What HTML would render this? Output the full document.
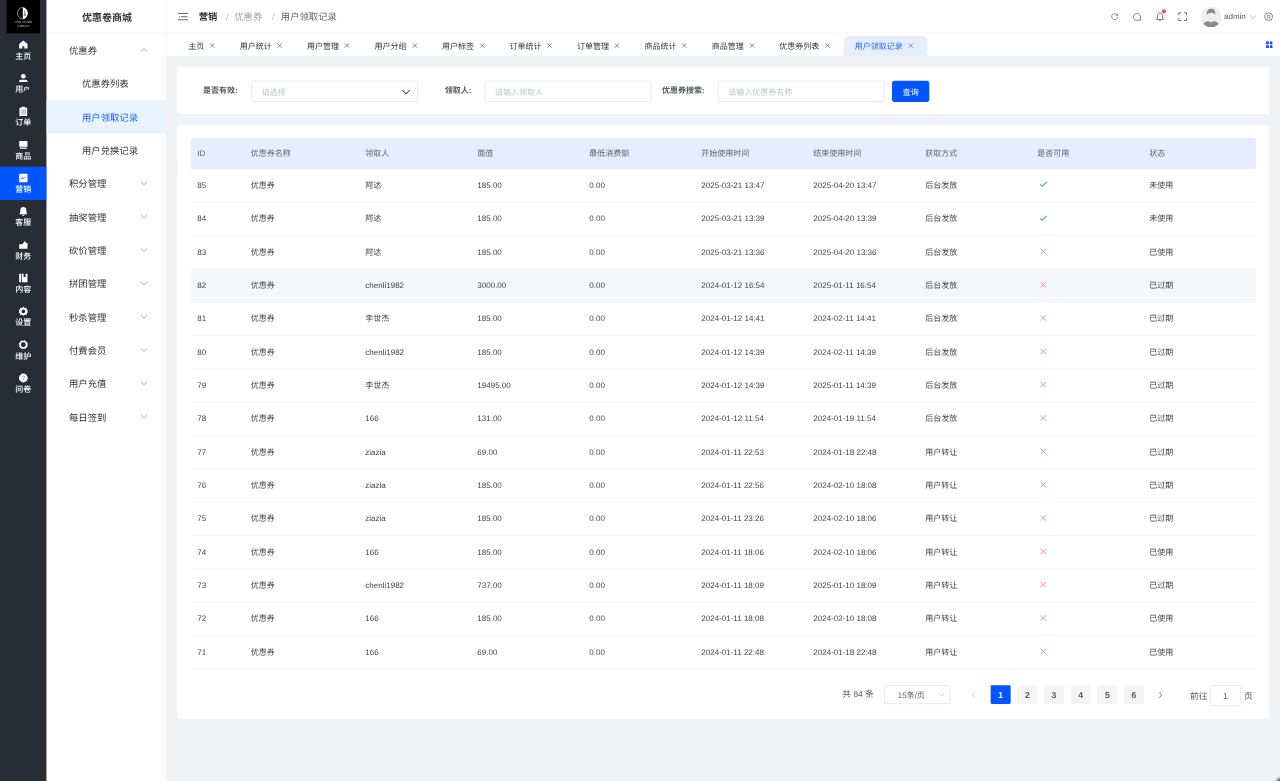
<!DOCTYPE html>
<html lang="zh-CN">
<head>
<meta charset="utf-8">
<title>用户领取记录</title>
<style>
*{box-sizing:border-box;margin:0;padding:0}
html,body{width:1280px;height:781px;overflow:hidden;background:#f0f2f5}
body{font-family:"Liberation Sans","Noto Sans CJK SC",sans-serif;color:#606266;font-size:12px;text-rendering:geometricPrecision;-webkit-font-smoothing:antialiased}
#app{position:absolute;left:0;top:0;width:1920px;height:1172px;transform:scale(0.6666667);transform-origin:0 0;background:#f0f2f5;overflow:hidden}
/* dark aside */
.a1{position:absolute;left:0;top:0;width:70px;height:1172px;background:#282c34}
.logo{position:absolute;left:10px;top:0;width:50px;height:49.5px;background:#000}
.logo svg{position:absolute;left:0;top:0;width:50px;height:50px}
.its{position:absolute;left:0;top:50px;width:70px}
.it{height:50px;position:relative;color:#fff;text-align:center}
.it svg{position:absolute;left:28px;top:9.5px;width:14px;height:14px;overflow:visible}
.it span{position:absolute;left:0;width:70px;top:27px;font-size:12px;line-height:14px;color:#fff;font-weight:500}
.it.act{background:#0256ff}
.it small{display:inline-block;width:12px;font-size:10px;text-align:left;vertical-align:1px;line-height:10px;transform:scaleY(0.8)}
/* white aside */
.a2{position:absolute;left:70px;top:0;width:180px;height:1172px;background:#fff;border-right:1px solid #e9ecf1}
.a2 .tt{height:50px;line-height:55px;overflow:hidden;text-align:center;font-size:15px;font-weight:700;color:#33363c;border-bottom:1px solid #f0f2f5;padding-left:2px}
.mi{height:50px;line-height:52px;font-size:14px;color:#303133;padding-left:33.5px;position:relative}
.mi.sub{padding-left:53px}
.mi.on{background:#e8f3ff;color:#1a62f0}
.mi .arr{position:absolute;left:140px;top:18.5px;width:12px;height:12px}
/* header */
.hd{position:absolute;left:250px;top:0;width:1670px;height:50px;background:#fff;border-bottom:1px solid #f1f2f4}
.hd .ham{position:absolute;left:17px;top:18px;width:15px;height:14px}
.bc{position:absolute;left:48px;top:0;height:50px;line-height:50px;font-size:14px;color:#9c9ea3;white-space:nowrap}
.bc b{color:#303133;font-weight:700}
.bc i{font-style:normal;color:#b4b8bf;margin:0 8.5px 0 13px}
.bc i+i,.bc i.s2{margin-left:14.5px;margin-right:9.5px}
.bc em{font-style:normal;color:#606266}
.hi{position:absolute;top:18px;width:14px;height:14px}
.av{position:absolute;left:1550.5px;top:9.5px;width:31px;height:31px;border-radius:50%;overflow:hidden;background:#efefef}
.adm{position:absolute;left:1586px;top:0;line-height:50px;font-size:12px;color:#50545a}
/* tabs */
.tb{position:absolute;left:250px;top:50px;width:1670px;height:34px;background:#fff}
.tabs{position:absolute;left:16.3px;top:4px;height:30px;display:flex}
.tab{height:30px;line-height:30px;font-size:12px;color:#303133;padding-left:16px;position:relative;white-space:nowrap;flex:none}
.tab .x{position:relative;display:inline-block;vertical-align:top;margin-left:6.7px;top:9.1px;width:10.6px;height:10.6px;color:#70757d}
.tab span{display:inline-block}
.tab.cur{background:#e4eefe;color:#2a68ea;border-radius:8px 8px 0 0}
.tab.cur .x{color:#5c8cf0}
.fl{position:absolute;bottom:0;width:5px;height:8px;background:#e4eefe}
.fl.l{left:-4.5px}
.fl.r{right:-4.5px}
.fl.l:after,.fl.r:after{content:"";position:absolute;top:-1px;width:10px;height:9px;background:#fff}
.fl.l:after{left:-5.5px;border-radius:0 0 5px 0}
.fl.r:after{left:0.5px;border-radius:0 0 0 5px}
.grid{position:absolute;left:1649px;top:11.5px;width:10px;height:10px}
/* content */
.card{position:absolute;left:266px;width:1638px;background:#fff;border-radius:4px}
.c1{top:100px;height:71px}
.c2{top:187px;height:891px}
.lab{position:absolute;top:19.5px;height:32px;line-height:32px;font-size:12px;font-weight:700;color:#55585e;white-space:nowrap}
.inp{position:absolute;top:21px;width:250px;height:32px;border:1px solid #dcdfe6;border-radius:3px;line-height:32px;padding-left:15px;font-size:12px;color:#c0c4cc;background:#fff}
.btn{position:absolute;left:1072px;top:21px;width:56px;height:32px;border-radius:4px;background:#0256ff;color:#fff;font-size:12px;line-height:34px;text-align:center}
table{position:absolute;left:20px;top:20px;width:1598px;border-collapse:collapse;table-layout:fixed;font-size:12px;color:#404348}
th{height:46.5px;text-align:left;font-weight:400;color:#62666e;padding:0 0 1.5px 10px}
.thbg{position:absolute;left:20px;top:20px;width:1598px;height:46.5px;background:#e4eefe;border-radius:4px}
td{height:50px;line-height:23px;padding:0.4px 0 0 10px;border-bottom:1px solid #eff0f4;white-space:nowrap}
.hvbg{position:absolute;left:20px;top:216.5px;width:1598px;height:49.5px;background:#f5f7fa}
td svg{display:block;width:12px;height:12px;margin-left:2.5px;position:relative;top:-2px}
/* pagination */
.pg{position:absolute;right:25px;top:841px;height:28px;display:flex;align-items:center;font-size:13px;color:#606266;white-space:nowrap}
.pg .tot{margin-right:15px;position:relative;top:-1.2px}
.pg .sz{width:100px;height:28px;border:1px solid #dcdfe6;border-radius:3px;position:relative;margin-right:15px;text-align:center;padding-right:18px;line-height:28px;font-size:12px}
.pg .sz svg{position:absolute;right:7px;top:8px;width:10px;height:10px}
.pg .nb{width:30px;height:28px;margin:0 5px;position:relative}
.pg .nb svg{position:absolute;left:9.5px;top:8.5px;width:11px;height:11px}
.pg .n{width:30px;height:28px;margin:0 5px;background:#f4f4f5;border-radius:2px;text-align:center;line-height:30px;font-weight:700;font-size:13px;color:#55585e}
.pg .n.a{background:#0256ff;color:#fff}
.pg .go{margin-left:24px}
.pg .ed{position:relative;top:1.5px;width:46px;height:31px;border:1px solid #dcdfe6;border-radius:3px;margin:0 5px 0 4px;text-align:center;line-height:31px}
.corner{position:absolute;right:-6px;bottom:-6px;width:11px;height:11px;border-radius:50%;background:#5a6472;filter:blur(1.5px)}
</style>
</head>
<body>
<div id="app">
  <div class="a1">
    <div class="logo">
      <svg viewBox="0 0 50 50">
        <ellipse cx="23.6" cy="19.8" rx="7.3" ry="8.5" fill="none" stroke="#e8e8e8" stroke-width="0.9"/>
        <path d="M24.2 11.3 A7.3 8.5 0 0 1 24.2 28.3 Z" fill="#fff"/>
        <path d="M27 14 L29.6 24 H25.2 Z" fill="#9a9a9a"/>
        <text x="25" y="35.2" font-size="4.6" font-family="Liberation Sans, sans-serif" fill="#bdbdbd" text-anchor="middle" letter-spacing="0.3">ONE MORE</text>
        <text x="25" y="40.6" font-size="4.6" font-family="Liberation Sans, sans-serif" fill="#bdbdbd" text-anchor="middle" letter-spacing="0.3">DREAM</text>
      </svg>
    </div>
    <div class="its">
<div class="it"><svg viewBox="0 0 14 14" fill="#fff"><path d="M7 0.8 L13.3 6 V12.9 H8.5 V9.2 H5.5 V12.9 H0.7 V6 Z"/></svg><span>主页</span></div>
<div class="it"><svg viewBox="0 0 14 14" fill="#fff"><circle cx="7" cy="4.4" r="3.5"/><path d="M0.6 13 V12.2 Q0.6 9.7 3.4 9.7 H10.6 Q13.4 9.7 13.4 12.2 V13 Z"/></svg><span>用<small>户</small></span></div>
<div class="it"><svg viewBox="0 0 14 14" fill="#fff"><path d="M1.2 1.6 H4.4 V0 H9.6 V1.6 H12.8 V14 H1.2 Z M3.6 4.6 V11.4 H10.4 V4.6 Z" fill-rule="evenodd"/><path d="M3.6 4.6 H10.4 V11.4 H3.6 Z" fill="#dfe6ee"/><path d="M5 6.6 H9 M5 9 H9" stroke="#8d97a8" stroke-width="0.9" fill="none"/></svg><span>订单</span></div>
<div class="it"><svg viewBox="0 0 14 14" fill="#fff"><path d="M1.6 1.4 H12.4 Q13.2 1.4 13.2 2.2 V9.2 Q13.2 10 12.4 10 H1.6 Q0.8 10 0.8 9.2 V2.2 Q0.8 1.4 1.6 1.4 Z M1.8 11.2 H12.2 V13 H1.8 Z"/></svg><span>商品</span></div>
<div class="it act"><svg viewBox="0 0 14 14" fill="#fff"><path d="M1.6 0.8 H12.4 Q13.3 0.8 13.3 1.7 V12.3 Q13.3 13.2 12.4 13.2 H1.6 Q0.7 13.2 0.7 12.3 V1.7 Q0.7 0.8 1.6 0.8 Z M3.2 9.6 L5.7 7 L7.4 8.5 L10.9 4.8 L10.3 4.2 L7.4 7.3 L5.7 5.8 L2.6 9 Z" fill-rule="evenodd"/></svg><span>营销</span></div>
<div class="it"><svg viewBox="0 0 14 14" fill="#fff"><path d="M7 0.6 C10 0.6 11.6 3 11.6 5.6 V9 L13.2 11.2 H0.8 L2.4 9 V5.6 C2.4 3 4 0.6 7 0.6 Z M5.2 12.2 H8.8 C8.8 13.2 7.9 13.9 7 13.9 C6.1 13.9 5.2 13.2 5.2 12.2 Z"/></svg><span>客服</span></div>
<div class="it"><svg viewBox="0 0 14 14" fill="#fff"><path d="M0.8 6.4 H5.6 L9.2 1.6 L11.4 4.4 H13.2 V13 H0.8 Z"/></svg><span>财务</span></div>
<div class="it"><svg viewBox="0 0 14 14" fill="#fff"><path d="M0.8 0.8 H3.9 V13.4 H0.8 Z M5 0.8 H7.4 V6.2 L8.9 5 L10.4 6.2 V0.8 H13.2 V13.4 H5 Z"/></svg><span>内容</span></div>
<div class="it"><svg viewBox="0 0 14 14" fill="#fff"><path d="M7 0.2 L9 1.9 L11.6 1.6 L12.1 4.1 L14 5.6 L12.9 7 L14 8.4 L12.1 9.9 L11.6 12.4 L9 12.1 L7 13.8 L5 12.1 L2.4 12.4 L1.9 9.9 L0 8.4 L1.1 7 L0 5.6 L1.9 4.1 L2.4 1.6 L5 1.9 Z M7 4.2 A2.8 2.8 0 1 0 7 9.8 A2.8 2.8 0 1 0 7 4.2 Z" fill-rule="evenodd"/></svg><span>设置</span></div>
<div class="it"><svg viewBox="0 0 14 14" fill="#fff"><path d="M7 1 A6 6 0 1 0 7 13 A6 6 0 1 0 7 1 Z M7 3.5 A3.5 3.5 0 1 1 7 10.5 A3.5 3.5 0 1 1 7 3.5 Z" fill-rule="evenodd"/><circle cx="7" cy="7" r="6.3" fill="none" stroke="#fff" stroke-width="1.2" stroke-dasharray="2.47 2.47"/><circle cx="7" cy="7" r="3.2" fill="#222844"/></svg><span>维护</span></div>
<div class="it"><svg viewBox="0 0 14 14" fill="#fff"><circle cx="7" cy="7" r="6.6"/><text x="7" y="10.4" font-size="9.5" font-family="Liberation Sans, sans-serif" font-weight="bold" text-anchor="middle" fill="#98a2b5">?</text></svg><span>问卷</span></div>
    </div>
  </div>
  <div class="a2">
    <div class="tt">优惠卷商城</div>
<div class="mi">优惠券<svg class="arr" viewBox="0 0 12 12"><path d="M1.5 8.2 L6 3.8 L10.5 8.2" fill="none" stroke="#909399" stroke-width="1.2"/></svg></div>
<div class="mi sub">优惠券列表</div>
<div class="mi sub on">用户领取记录</div>
<div class="mi sub">用户兑换记录</div>
<div class="mi">积分管理<svg class="arr" viewBox="0 0 12 12"><path d="M1.5 3.8 L6 8.2 L10.5 3.8" fill="none" stroke="#909399" stroke-width="1.2"/></svg></div>
<div class="mi">抽奖管理<svg class="arr" viewBox="0 0 12 12"><path d="M1.5 3.8 L6 8.2 L10.5 3.8" fill="none" stroke="#909399" stroke-width="1.2"/></svg></div>
<div class="mi">砍价管理<svg class="arr" viewBox="0 0 12 12"><path d="M1.5 3.8 L6 8.2 L10.5 3.8" fill="none" stroke="#909399" stroke-width="1.2"/></svg></div>
<div class="mi">拼团管理<svg class="arr" viewBox="0 0 12 12"><path d="M1.5 3.8 L6 8.2 L10.5 3.8" fill="none" stroke="#909399" stroke-width="1.2"/></svg></div>
<div class="mi">秒杀管理<svg class="arr" viewBox="0 0 12 12"><path d="M1.5 3.8 L6 8.2 L10.5 3.8" fill="none" stroke="#909399" stroke-width="1.2"/></svg></div>
<div class="mi">付费会员<svg class="arr" viewBox="0 0 12 12"><path d="M1.5 3.8 L6 8.2 L10.5 3.8" fill="none" stroke="#909399" stroke-width="1.2"/></svg></div>
<div class="mi">用户充值<svg class="arr" viewBox="0 0 12 12"><path d="M1.5 3.8 L6 8.2 L10.5 3.8" fill="none" stroke="#909399" stroke-width="1.2"/></svg></div>
<div class="mi">每日签到<svg class="arr" viewBox="0 0 12 12"><path d="M1.5 3.8 L6 8.2 L10.5 3.8" fill="none" stroke="#909399" stroke-width="1.2"/></svg></div>
  </div>
  <div class="hd">
    <svg class="ham" viewBox="0 0 14 14" preserveAspectRatio="none"><path d="M0 2.3 H14 M1.3 7 H2.9 M4.2 7 H13.4 M0 11.7 H14" stroke="#666b75" stroke-width="1.6" fill="none"/></svg>
    <div class="bc"><b>营销</b><i>/</i>优惠券<i class="s2">/</i><em>用户领取记录</em></div>
    <svg class="hi" style="left:1416px;top:19px;width:12px;height:12px" viewBox="0 0 14 14"><path d="M11.6 4.2 A5.3 5.3 0 1 0 12.3 7.6" fill="none" stroke="#4c5058" stroke-width="1.1"/><path d="M12.4 1.6 V4.8 H9.2" fill="none" stroke="#4c5058" stroke-width="1.1"/></svg>
    <svg class="hi" style="left:1449px;top:18.5px;width:13px;height:13px" viewBox="0 0 14 14"><path d="M7 1.4 A5.6 5.6 0 1 0 10 11.7 L12.6 12.4 V7.4 A5.6 5.6 0 0 0 7 1.4 Z" fill="none" stroke="#4c5058" stroke-width="1.1"/></svg>
    <svg class="hi" style="left:1483px" viewBox="0 0 14 14"><path d="M7 1.2 C9.6 1.2 10.8 3.2 10.8 5.6 V9.6 L12.6 11.2 H1.4 L3.2 9.6 V5.6 C3.2 3.2 4.4 1.2 7 1.2 Z M5.8 12.8 H8.2" fill="none" stroke="#4c5058" stroke-width="1.1"/></svg>
    <div style="position:absolute;left:1493px;top:14px;width:6px;height:6px;border-radius:50%;background:#f04a5a"></div>
    <svg class="hi" style="left:1517px" viewBox="0 0 14 14"><path d="M1.2 4.8 V1.2 H4.8 M9.2 1.2 H12.8 V4.8 M12.8 9.2 V12.8 H9.2 M4.8 12.8 H1.2 V9.2" fill="none" stroke="#4c5058" stroke-width="1.25"/></svg>
    <div class="av"><svg viewBox="0 0 30 30" width="31" height="31"><rect width="30" height="30" fill="#efefef"/><path d="M2.5 30 C2.5 22.5 8 20.8 15 20.8 C22 20.8 27.5 22.5 27.5 30 Z" fill="#8b8b8b"/><rect x="12" y="16" width="6" height="6.4" fill="#efe7e5"/><ellipse cx="15" cy="12.8" rx="5.2" ry="6.6" fill="#f3eceb"/><path d="M9 12.6 C7.8 5.4 11.4 2.8 15.4 3 C19.8 3 22.2 5.8 21 12.6 C20.2 9.6 18.6 8.8 15 9.2 C11.6 9 10 9.8 9 12.6 Z" fill="#8d8d8d"/></svg></div>
    <div class="adm">admin</div>
    <svg class="hi" style="left:1624px;top:20px;width:11px;height:11px" viewBox="0 0 12 12"><path d="M1.5 3.8 L6 8.2 L10.5 3.8" fill="none" stroke="#80858d" stroke-width="1.1"/></svg>
    <svg class="hi" style="left:1646px" viewBox="0 0 14 14"><path d="M7 0.9 L8.7 2.3 L10.9 2 L11.5 4.1 L13.3 5.3 L12.5 7 L13.3 8.7 L11.5 9.9 L10.9 12 L8.7 11.7 L7 13.1 L5.3 11.7 L3.1 12 L2.5 9.9 L0.7 8.7 L1.5 7 L0.7 5.3 L2.5 4.1 L3.1 2 L5.3 2.3 Z" fill="none" stroke="#4c5058" stroke-width="1"/><circle cx="7" cy="7" r="2.2" fill="none" stroke="#4c5058" stroke-width="1"/></svg>
  </div>
  <div class="tb">
    <div class="tabs">
<div class="tab" style="width:77.20px"><span>主页</span><svg class="x" viewBox="0 0 12 12"><path d="M2.4 2.4 L9.6 9.6 M9.6 2.4 L2.4 9.6" fill="none" stroke="currentColor" stroke-width="1.5"/></svg></div>
<div class="tab" style="width:101.20px"><span>用户统计</span><svg class="x" viewBox="0 0 12 12"><path d="M2.4 2.4 L9.6 9.6 M9.6 2.4 L2.4 9.6" fill="none" stroke="currentColor" stroke-width="1.5"/></svg></div>
<div class="tab" style="width:101.20px"><span>用户管理</span><svg class="x" viewBox="0 0 12 12"><path d="M2.4 2.4 L9.6 9.6 M9.6 2.4 L2.4 9.6" fill="none" stroke="currentColor" stroke-width="1.5"/></svg></div>
<div class="tab" style="width:101.20px"><span>用户分组</span><svg class="x" viewBox="0 0 12 12"><path d="M2.4 2.4 L9.6 9.6 M9.6 2.4 L2.4 9.6" fill="none" stroke="currentColor" stroke-width="1.5"/></svg></div>
<div class="tab" style="width:101.20px"><span>用户标签</span><svg class="x" viewBox="0 0 12 12"><path d="M2.4 2.4 L9.6 9.6 M9.6 2.4 L2.4 9.6" fill="none" stroke="currentColor" stroke-width="1.5"/></svg></div>
<div class="tab" style="width:101.20px"><span>订单统计</span><svg class="x" viewBox="0 0 12 12"><path d="M2.4 2.4 L9.6 9.6 M9.6 2.4 L2.4 9.6" fill="none" stroke="currentColor" stroke-width="1.5"/></svg></div>
<div class="tab" style="width:101.20px"><span>订单管理</span><svg class="x" viewBox="0 0 12 12"><path d="M2.4 2.4 L9.6 9.6 M9.6 2.4 L2.4 9.6" fill="none" stroke="currentColor" stroke-width="1.5"/></svg></div>
<div class="tab" style="width:101.20px"><span>商品统计</span><svg class="x" viewBox="0 0 12 12"><path d="M2.4 2.4 L9.6 9.6 M9.6 2.4 L2.4 9.6" fill="none" stroke="currentColor" stroke-width="1.5"/></svg></div>
<div class="tab" style="width:101.20px"><span>商品管理</span><svg class="x" viewBox="0 0 12 12"><path d="M2.4 2.4 L9.6 9.6 M9.6 2.4 L2.4 9.6" fill="none" stroke="currentColor" stroke-width="1.5"/></svg></div>
<div class="tab" style="width:113.20px"><span>优惠券列表</span><svg class="x" viewBox="0 0 12 12"><path d="M2.4 2.4 L9.6 9.6 M9.6 2.4 L2.4 9.6" fill="none" stroke="currentColor" stroke-width="1.5"/></svg></div>
<div class="tab cur" style="width:124.5px"><i class="fl l"></i><i class="fl r"></i><span>用户领取记录</span><svg class="x" viewBox="0 0 12 12"><path d="M2.4 2.4 L9.6 9.6 M9.6 2.4 L2.4 9.6" fill="none" stroke="currentColor" stroke-width="1.5"/></svg></div>
    </div>
    <svg class="grid" viewBox="0 0 10 10"><rect x="0" y="0" width="4.3" height="4.3" rx="0.8" fill="#0a4cf2"/><rect x="5.7" y="0" width="4.3" height="4.3" rx="0.8" fill="#0a4cf2"/><rect x="0" y="5.7" width="4.3" height="4.3" rx="0.8" fill="#0a4cf2"/><rect x="5.7" y="5.7" width="4.3" height="4.3" rx="0.8" fill="#0a4cf2"/></svg>
  </div>

  <div class="card c1">
    <div class="lab" style="left:38.5px">是否有效:</div>
    <div class="inp" style="left:110.5px">请选择<svg style="position:absolute;right:9.5px;top:8.5px;width:14px;height:14px" viewBox="0 0 12 12"><path d="M1 3.6 L6 8.4 L11 3.6" fill="none" stroke="#5c6068" stroke-width="1.45"/></svg></div>
    <div class="lab" style="left:401px">领取人:</div>
    <div class="inp" style="left:460.5px">请输入领取人</div>
    <div class="lab" style="left:727px">优惠券搜索:</div>
    <div class="inp" style="left:810.5px">请输入优惠券名称</div>
    <div class="btn">查询</div>
  </div>

  <div class="card c2">
    <div class="thbg"></div><div class="hvbg"></div>
    <table>
      <colgroup><col style="width:80px"><col style="width:172px"><col style="width:168px"><col style="width:168px"><col style="width:168px"><col style="width:168px"><col style="width:168px"><col style="width:168px"><col style="width:168px"><col></colgroup>
      <thead><tr><th>ID</th><th>优惠券名称</th><th>领取人</th><th>面值</th><th>最低消费额</th><th>开始使用时间</th><th>结束使用时间</th><th>获取方式</th><th>是否可用</th><th>状态</th></tr></thead>
      <tbody>
<tr><td>85</td><td>优惠券</td><td>阿达</td><td>185.00</td><td>0.00</td><td>2025-03-21 13:47</td><td>2025-04-20 13:47</td><td>后台发放</td><td><svg class="ck" viewBox="0 0 12 12"><path d="M1.2 6.4 L4.4 9.4 L10.8 2.8" fill="none" stroke="#4593c8" stroke-width="1.6"/></svg></td><td>未使用</td></tr>
<tr><td>84</td><td>优惠券</td><td>阿达</td><td>185.00</td><td>0.00</td><td>2025-03-21 13:39</td><td>2025-04-20 13:39</td><td>后台发放</td><td><svg class="ck" viewBox="0 0 12 12"><path d="M1.2 6.4 L4.4 9.4 L10.8 2.8" fill="none" stroke="#4593c8" stroke-width="1.6"/></svg></td><td>未使用</td></tr>
<tr><td>83</td><td>优惠券</td><td>阿达</td><td>185.00</td><td>0.00</td><td>2025-03-21 13:36</td><td>2025-04-20 13:36</td><td>后台发放</td><td><svg class="cx" viewBox="0 0 12 12"><path d="M2 2 L10 10 M10 2 L2 10" fill="none" stroke="#e86f82" stroke-width="1.15"/></svg></td><td>已使用</td></tr>
<tr class="hov"><td>82</td><td>优惠券</td><td>chenli1982</td><td>3000.00</td><td>0.00</td><td>2024-01-12 16:54</td><td>2025-01-11 16:54</td><td>后台发放</td><td><svg class="cx" viewBox="0 0 12 12"><path d="M2 2 L10 10 M10 2 L2 10" fill="none" stroke="#e86f82" stroke-width="1.15"/></svg></td><td>已过期</td></tr>
<tr><td>81</td><td>优惠券</td><td>李世杰</td><td>185.00</td><td>0.00</td><td>2024-01-12 14:41</td><td>2024-02-11 14:41</td><td>后台发放</td><td><svg class="cx" viewBox="0 0 12 12"><path d="M2 2 L10 10 M10 2 L2 10" fill="none" stroke="#e86f82" stroke-width="1.15"/></svg></td><td>已过期</td></tr>
<tr><td>80</td><td>优惠券</td><td>chenli1982</td><td>185.00</td><td>0.00</td><td>2024-01-12 14:39</td><td>2024-02-11 14:39</td><td>后台发放</td><td><svg class="cx" viewBox="0 0 12 12"><path d="M2 2 L10 10 M10 2 L2 10" fill="none" stroke="#e86f82" stroke-width="1.15"/></svg></td><td>已过期</td></tr>
<tr><td>79</td><td>优惠券</td><td>李世杰</td><td>19495.00</td><td>0.00</td><td>2024-01-12 14:39</td><td>2025-01-11 14:39</td><td>后台发放</td><td><svg class="cx" viewBox="0 0 12 12"><path d="M2 2 L10 10 M10 2 L2 10" fill="none" stroke="#e86f82" stroke-width="1.15"/></svg></td><td>已过期</td></tr>
<tr><td>78</td><td>优惠券</td><td>166</td><td>131.00</td><td>0.00</td><td>2024-01-12 11:54</td><td>2024-01-19 11:54</td><td>后台发放</td><td><svg class="cx" viewBox="0 0 12 12"><path d="M2 2 L10 10 M10 2 L2 10" fill="none" stroke="#e86f82" stroke-width="1.15"/></svg></td><td>已过期</td></tr>
<tr><td>77</td><td>优惠券</td><td>ziazia</td><td>69.00</td><td>0.00</td><td>2024-01-11 22:53</td><td>2024-01-18 22:48</td><td>用户转让</td><td><svg class="cx" viewBox="0 0 12 12"><path d="M2 2 L10 10 M10 2 L2 10" fill="none" stroke="#e86f82" stroke-width="1.15"/></svg></td><td>已过期</td></tr>
<tr><td>76</td><td>优惠券</td><td>ziazia</td><td>185.00</td><td>0.00</td><td>2024-01-11 22:56</td><td>2024-02-10 18:08</td><td>用户转让</td><td><svg class="cx" viewBox="0 0 12 12"><path d="M2 2 L10 10 M10 2 L2 10" fill="none" stroke="#e86f82" stroke-width="1.15"/></svg></td><td>已过期</td></tr>
<tr><td>75</td><td>优惠券</td><td>ziazia</td><td>185.00</td><td>0.00</td><td>2024-01-11 23:26</td><td>2024-02-10 18:06</td><td>用户转让</td><td><svg class="cx" viewBox="0 0 12 12"><path d="M2 2 L10 10 M10 2 L2 10" fill="none" stroke="#e86f82" stroke-width="1.15"/></svg></td><td>已过期</td></tr>
<tr><td>74</td><td>优惠券</td><td>166</td><td>185.00</td><td>0.00</td><td>2024-01-11 18:06</td><td>2024-02-10 18:06</td><td>用户转让</td><td><svg class="cx" viewBox="0 0 12 12"><path d="M2 2 L10 10 M10 2 L2 10" fill="none" stroke="#e86f82" stroke-width="1.15"/></svg></td><td>已使用</td></tr>
<tr><td>73</td><td>优惠券</td><td>chenli1982</td><td>737.00</td><td>0.00</td><td>2024-01-11 18:09</td><td>2025-01-10 18:09</td><td>用户转让</td><td><svg class="cx" viewBox="0 0 12 12"><path d="M2 2 L10 10 M10 2 L2 10" fill="none" stroke="#e86f82" stroke-width="1.15"/></svg></td><td>已过期</td></tr>
<tr><td>72</td><td>优惠券</td><td>166</td><td>185.00</td><td>0.00</td><td>2024-01-11 18:08</td><td>2024-02-10 18:08</td><td>用户转让</td><td><svg class="cx" viewBox="0 0 12 12"><path d="M2 2 L10 10 M10 2 L2 10" fill="none" stroke="#e86f82" stroke-width="1.15"/></svg></td><td>已使用</td></tr>
<tr><td>71</td><td>优惠券</td><td>166</td><td>69.00</td><td>0.00</td><td>2024-01-11 22:48</td><td>2024-01-18 22:48</td><td>用户转让</td><td><svg class="cx" viewBox="0 0 12 12"><path d="M2 2 L10 10 M10 2 L2 10" fill="none" stroke="#e86f82" stroke-width="1.15"/></svg></td><td>已使用</td></tr>
      </tbody>
    </table>
    <div class="pg">
      <span class="tot">共 84 条</span>
      <div class="sz">15条/页<svg viewBox="0 0 12 12"><path d="M1.5 3.8 L6 8.2 L10.5 3.8" fill="none" stroke="#b0b4bb" stroke-width="1.2"/></svg></div>
      <div class="nb"><svg viewBox="0 0 12 12"><path d="M8 1.5 L3.6 6 L8 10.5" fill="none" stroke="#c0c4cc" stroke-width="1.3"/></svg></div>
      <div class="n a">1</div><div class="n">2</div><div class="n">3</div><div class="n">4</div><div class="n">5</div><div class="n">6</div>
      <div class="nb"><svg viewBox="0 0 12 12"><path d="M4 1.5 L8.4 6 L4 10.5" fill="none" stroke="#50545c" stroke-width="1.3"/></svg></div>
      <span class="go">前往</span><div class="ed">1</div><span>页</span>
    </div>
  </div>
  <div class="corner"></div>
</div>
</body>
</html>
